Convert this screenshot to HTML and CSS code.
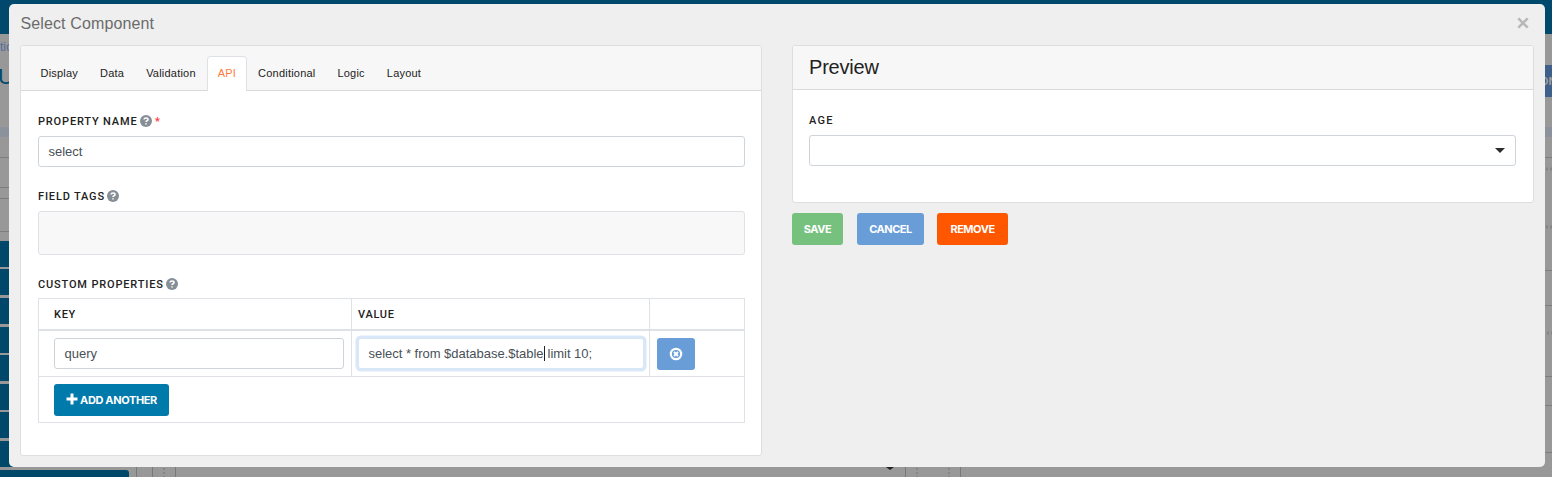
FILE: index.html
```html
<!DOCTYPE html>
<html lang="en">
<head>
<meta charset="utf-8">
<title>Select Component</title>
<link rel="stylesheet" href="styles.css">
</head>
<body>
<svg class="canvas" width="1552" height="477" viewBox="0 0 1552 477" aria-hidden="true">
  <rect width="1552" height="477" fill="#989898"/>
  <rect width="1552" height="34" fill="#00486c"/>
  <text class="crumb" x="0" y="51">tic</text>
  <text class="heading" x="-2" y="84">U</text>
  <rect y="127" width="1552" height="10" fill="#8b929b"/>
  <path d="M0 157.500H9M0 187.500H9M0 198.500H9M0 231.500H9M1545 157.500h7M1545 270.500h7M1545 305.500h7M1545 376.500h7M1545 405.500h7M1545 452.500h7" stroke="#7c7d80"/>
  <path d="M0 241h9v26H0zM0 269h9v26H0zM0 298h9v26H0zM0 327h9v26H0zM0 355h9v26H0zM0 384h9v26H0zM0 412h9v26H0zM0 441h14v26H0zM0 470h126a3 3 0 0 1 3 3v4H0z" fill="#00486a"/>
  <path d="M136.500 467v10M152.500 467v10M175.500 467v10M905.500 467v10M960.500 467v10" stroke="#77797c"/>
  <path d="M164 468v9M917 468v9M949 468v9" stroke="#858585" stroke-width="2" stroke-dasharray="2 2"/>
  <path d="M886 467h8l-4 3z" fill="#222"/>
  <rect x="1540" y="65" width="12" height="32" fill="#3e608a"/>
  <text class="bgbutton" x="1540" y="85">ON</text>
  <path d="M1546 169h6M1546 227h6M1547 333h5" stroke="#858585" stroke-width="3" stroke-dasharray="2 2"/>
</svg>
<main class="modal">
  <header class="modal-head">
    <h1 class="title">Select Component</h1>
    <svg class="close" width="12" height="12" viewBox="0 0 12 12"><path d="M1.300 1.300l9.400 9.400M10.700 1.300L1.300 10.700"/></svg>
  </header>
  <div class="columns">
    <section class="card settings">
      <nav class="tabs">
        <a class="tab">Display</a><a class="tab">Data</a><a class="tab">Validation</a><a class="tab active">API</a><a class="tab">Conditional</a><a class="tab">Logic</a><a class="tab">Layout</a>
      </nav>
      <div class="settings-body">
        <div class="label"><span>Property Name</span><svg class="help" viewBox="0 0 12 12"><circle cx="6" cy="6" r="6"/><path d="M4 4.500Q4.200 3 6 3Q8 3 8 4.500Q8 5.300 7 5.800Q6 6.200 6 7.100M6 8.200v1.400"/></svg><span class="required">*</span></div>
        <div class="input">select</div>
        <div class="label tags-label"><span>Field Tags</span><svg class="help" viewBox="0 0 12 12"><circle cx="6" cy="6" r="6"/><path d="M4 4.500Q4.200 3 6 3Q8 3 8 4.500Q8 5.300 7 5.800Q6 6.200 6 7.100M6 8.200v1.400"/></svg></div>
        <div class="tagbox"></div>
        <div class="label props-label"><span>Custom Properties</span><svg class="help" viewBox="0 0 12 12"><circle cx="6" cy="6" r="6"/><path d="M4 4.500Q4.200 3 6 3Q8 3 8 4.500Q8 5.300 7 5.800Q6 6.200 6 7.100M6 8.200v1.400"/></svg></div>
        <div class="grid">
          <div class="row grid-head"><div class="cell first th key">Key</div><div class="cell th value">Value</div><div class="cell"></div></div>
          <div class="row entry">
            <div class="cell first"><div class="input">query</div></div>
            <div class="cell"><div class="input focused"><span class="before">select * from $database.$table</span><i class="caret"></i><span class="after">limit 10;</span></div></div>
            <div class="cell"><button class="btn blue icon-btn" aria-label="Delete"><svg width="14" height="14" viewBox="0 0 14 14"><circle cx="7" cy="7" r="5.200" fill="none" stroke="#fff" stroke-width="2.200"/><path d="M5 5l4 4M9 5L5 9" stroke="#fff" stroke-width="2"/></svg></button></div>
          </div>
          <div class="row add-row"><button class="btn teal"><svg width="12" height="12" viewBox="0 0 12 12"><path d="M6 .5v11M.5 6h11" stroke="#fff" stroke-width="3"/></svg><span class="add-text">Add Another</span></button></div>
        </div>
      </div>
    </section>
    <div class="side">
      <section class="card preview">
        <h2 class="preview-title">Preview</h2>
        <div class="preview-body">
          <div class="label age-label"><span>Age</span></div>
          <div class="input select"><svg width="10" height="5" viewBox="0 0 10 5"><path d="M0 0h10L5 5z" fill="#2d2d2d"/></svg></div>
        </div>
      </section>
      <div class="actions">
        <button class="btn green"><span>Save</span></button><button class="btn blue cancel"><span>Cancel</span></button><button class="btn orange"><span>Remove</span></button>
      </div>
    </div>
  </div>
</main>
</body>
</html>
```
FILE: styles.css
```css
* { box-sizing: border-box; }
body { margin: 0; width: 1552px; height: 477px; overflow: hidden; background: #989898; font-family: "Liberation Sans", Arial, sans-serif; padding: 4px 7px 10px 9px; }
.canvas { position: absolute; left: 0; top: 0; }
.crumb { font-size: 12px; fill: #526b9b; }
.heading { font-size: 22px; fill: #00486c; }
.bgbutton { font: 700 11px Inter, sans-serif; fill: #9b9b9b; }
.modal { position: relative; height: 463px; border-radius: 5px; background: #efefef; padding: 0 11px; }
.modal-head { height: 41px; display: flex; align-items: center; justify-content: space-between; padding-right: 5px; }
.title { margin: 0; font-size: 16px; font-weight: 400; line-height: 38px; height: 40px; color: #6b6b6b; letter-spacing: .12px; padding-left: .5px; }
.close { margin: 0 0 3px; fill: none; stroke: #b8b8b8; stroke-width: 2.5; }
.columns { display: flex; gap: 30px; }
.card { background: #fff; border: 1px solid #dedede; border-radius: 3px; }
.settings { width: 742px; height: 411px; }
.tabs { display: flex; align-items: flex-end; height: 45px; padding-left: 8.5px; background: #f7f7f7; border-bottom: 1px solid #d8d9db; border-radius: 3px 3px 0 0; }
.tab { height: 35px; margin-bottom: -1px; padding: 0 10px; border: 1px solid transparent; border-bottom: 0; font-size: 11px; letter-spacing: .21px; line-height: 33px; color: #222; }
.tab.active { background: #fff; border-color: #dee2e6; border-radius: 4px 4px 0 0; color: #ff7a3d; }
.settings-body { padding: 23px 16px 0 17px; }
.label { display: flex; align-items: center; height: 14px; margin-bottom: 8px; font: 500 11px/14px Roboto, sans-serif; letter-spacing: .84px; text-transform: uppercase; color: #222; }
.label span { padding-top: 2px; }
.age-label { letter-spacing: 1.25px; }
.help { width: 12px; height: 12px; margin: -1px 0 0 2.5px; fill: #868e96; }
.help path { fill: none; stroke: #fff; stroke-width: 1.6; }
.required { color: #f33; margin-left: 3px; }
.input { display: flex; align-items: center; height: 31px; padding: 0 9.500px; background: #fff; border: 1px solid #ced4da; border-radius: 3px; font-size: 13px; letter-spacing: -.02px; color: #495057; white-space: nowrap; }
.tags-label { margin-top: 22px; }
.tagbox { height: 44px; border: 1px solid #dee2e6; border-radius: 3px; background: #f8f8f8; }
.props-label { margin: 22px 0 7px; }
.grid { border: 1px solid #dee2e6; height: 125px; }
.row { display: grid; grid-template-columns: 312px 298px 1fr; }
.grid-head { height: 32px; border-bottom: 2px solid #dee2e6; }
.cell { padding: 0 5px 0 6px; border-left: 1px solid #dee2e6; }
.cell.first { border-left: 0; padding: 0 7px 0 15px; }
.th { font: 500 11px/31px Roboto, sans-serif; letter-spacing: .7px; text-transform: uppercase; color: #222; }
.entry { height: 46px; border-bottom: 1px solid #dee2e6; }
.entry .cell { padding-top: 7px; }
.entry .cell:last-child { padding-left: 7px; }
.focused { border-color: #d8e7f7; box-shadow: 0 0 0 2.500px #d9e7f6; }
.caret { width: 1px; height: 15px; background: #222; }
.after { margin-left: 3px; }
.btn { display: inline-flex; align-items: center; justify-content: center; height: 32px; padding: 0; border: 0; border-radius: 3px; color: #fff; font: 700 11px Inter, sans-serif; letter-spacing: -.48px; text-transform: uppercase; }
.blue { background: #689dd8; }
.icon-btn { width: 38px; padding-bottom: 1px; }
.teal { width: 115px; background: #0079ab; gap: 2px; letter-spacing: -.37px; }
.teal svg { margin-top: -3px; }
.add-row { display: block; padding: 7px 15px; }
.side { width: 742px; }
.preview { height: 158px; }
.preview-title { margin: 0; height: 44px; padding-left: 16px; background: #f7f7f7; border-bottom: 1px solid #d8d9db; border-radius: 3px 3px 0 0; font-size: 20px; font-weight: 400; letter-spacing: -.2px; line-height: 43px; color: #222; }
.preview-body { padding: 23px 17px 0 16px; }
.select { justify-content: flex-end; padding-right: 10px; }
.actions { display: flex; gap: 13px; margin-top: 10px; }
.green { width: 51px; background: #77c17f; margin-right: 1px; }
.cancel { width: 67px; }
.orange { width: 71px; background: #ff5700; }
```
